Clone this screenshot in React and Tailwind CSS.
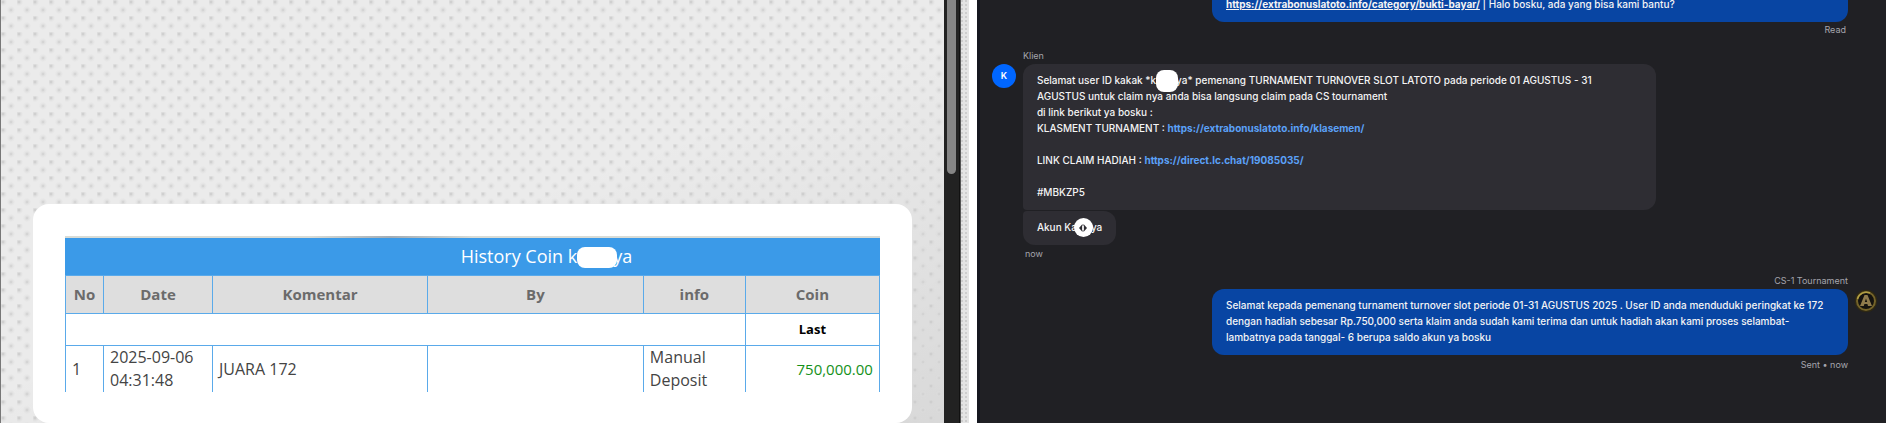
import React from 'react';

const columns = ['No', 'Date', 'Komentar', 'By', 'info', 'Coin'];

const rows = [
  { no: 1, date: '2025-09-06 04:31:48', comment: 'JUARA 172', by: '', info: 'Manual Deposit', coin: '750,000.00' },
];

// woven paper background, two staggered dot grids over a light shade
const texture =
  'bg-[#ebebeb] bg-[radial-gradient(circle_at_2px_2px,#c8c8c8_0,#d8d8d899_2px,transparent_4px),radial-gradient(circle_at_10px_10px,#cecece_0,#dcdcdc99_2px,transparent_4px),linear-gradient(160deg,transparent_50%,#00000014)] bg-[length:16px_16px,16px_16px,100%_100%]';

function HistoryTable() {
  return (
    <table className="w-full table-fixed border-collapse border-x border-[#3b9ae8] text-base leading-[23px] text-[#444]">
      <colgroup>
        <col className="w-[38px]" />
        <col className="w-[109px]" />
        <col className="w-[215px]" />
        <col />
        <col className="w-[102px]" />
        <col className="w-[134px]" />
      </colgroup>
      <thead>
        <tr className="h-[38px] bg-[#3b9ae8] text-lg text-white">
          <th colSpan={6} className="pl-[148px] font-normal">
            History Coin k
            <span className="relative inline-block w-9">
              <span className="absolute -top-4 left-0 h-[21px] w-10 rounded-lg bg-white"></span>
            </span>
            ya
          </th>
        </tr>
        <tr className="h-[38px] bg-[#dedede] text-[15px] text-[#6b6b6b]">
          {columns.map((name) => (
            <th key={name} className="border border-[#5aaaea] font-bold">{name}</th>
          ))}
        </tr>
      </thead>
      <tbody>
        <tr className="h-8 text-[13px] text-black">
          <td colSpan={5} className="border border-[#5aaaea]"></td>
          <th className="border border-[#5aaaea] font-bold">Last</th>
        </tr>
        {rows.map((row) => (
          <tr key={row.no} className="h-[46px]">
            <td className="border-x border-[#5aaaea] px-1.5">{row.no}</td>
            <td className="border-x border-[#5aaaea] px-1.5">{row.date}</td>
            <td className="border-x border-[#5aaaea] px-1.5">{row.comment}</td>
            <td className="border-x border-[#5aaaea] px-1.5">{row.by}</td>
            <td className="border-x border-[#5aaaea] px-1.5">{row.info}</td>
            <td className="border-x border-[#5aaaea] px-1.5 text-right text-[15px] text-[#14911a]">{row.coin}</td>
          </tr>
        ))}
      </tbody>
    </table>
  );
}

function AgentLogo() {
  return (
    <svg viewBox="0 0 24 24" className="h-6 w-6" aria-hidden="true">
      <circle cx="12" cy="12" r="10.5" fill="#15130f" stroke="#2e2814" strokeWidth="1.5" />
      <circle cx="12" cy="12" r="9" fill="none" stroke="#75642a" strokeWidth="2" />
      <path d="M3.5 10A9 9 0 0 1 16 4" fill="none" stroke="#b3a045" strokeWidth="1.5" />
      <path d="M10.5 6h3l4.5 11h-4l-.6-2h-3l-.6 2H6z" fill="#8f7b4c" />
      <path d="m12 9.5-1.2 3.5h2.4z" fill="#15130f" />
    </svg>
  );
}

function ChatPanel() {
  return (
    <section className="flex min-w-0 flex-1 flex-col justify-end overflow-hidden border-l-3 border-[#15171f] bg-[#202024] pr-2 pb-[50px] pl-3 font-['Inter',sans-serif] text-[10px] leading-4 font-medium text-[#f4f4f5]">
      <div className="mr-[30px] flex flex-col items-end">
        <div className="w-full max-w-[636px] rounded-xl bg-[#0845a3] px-3.5 pt-2 pb-2.5">
          <a href="#bukti-bayar" className="font-bold underline">https://extrabonuslatoto.info/category/bukti-bayar/</a> | Halo bosku, ada yang bisa kami bantu?
        </div>
        <div className="mr-0.5 text-[9px] font-normal text-[#a5a5ad]">Read</div>
      </div>

      <div className="mt-2.5 flex gap-[7px]">
        <div className="mt-4 flex h-6 w-6 shrink-0 items-center justify-center rounded-full bg-[#0066ff] text-[9px] font-semibold text-white">K</div>
        <div className="flex min-w-0 flex-1 flex-col items-start">
          <div className="text-[9px] font-normal text-[#a5a5ad]">Klien</div>
          <div className="w-full max-w-[633px] rounded-xl rounded-bl-sm bg-[#2e2d33] px-3.5 pt-2 pb-2.5">
            <p>
              Selamat user ID kakak *k
              <span className="relative inline-block w-5">
                <span className="absolute -top-[14px] left-0 h-[22px] w-[22px] rounded-lg bg-white"></span>
              </span>
              ya* pemenang TURNAMENT TURNOVER SLOT LATOTO pada periode 01 AGUSTUS - 31
              <br />
              AGUSTUS untuk claim nya anda bisa langsung claim pada CS tournament
            </p>
            <p>di link berikut ya bosku :</p>
            <p>KLASMENT TURNAMENT : <a href="#klasemen" className="font-bold text-[#5ba1f8]">https://extrabonuslatoto.info/klasemen/</a></p>
            <p className="mt-4">LINK CLAIM HADIAH : <a href="#claim" className="font-bold text-[#5ba1f8]">https://direct.lc.chat/19085035/</a></p>
            <p className="mt-4">#MBKZP5</p>
          </div>
          <div className="mt-px rounded-xl rounded-tl-sm bg-[#2e2d33] px-3.5 pt-2 pb-2.5">
            Akun Ka
            <span className="relative inline-block w-3.5">
              <span className="absolute -top-[13px] -left-[3px] flex h-[19px] w-[19px] items-center justify-center rounded-full bg-white">
                <svg viewBox="0 0 8 8" className="h-2 w-2" aria-hidden="true">
                  <path d="M3.5 0 0 4l3.5 4M4.5 0 8 4 4.5 8" fill="#2e2d33" />
                  <path d="M4 2v4" stroke="#ffffff" strokeWidth="1.5" />
                </svg>
              </span>
            </span>
            ya
          </div>
          <div className="mt-px ml-0.5 text-[9px] font-normal text-[#a5a5ad]">now</div>
        </div>
      </div>

      <div className="mt-[11px] flex justify-end gap-1.5">
        <div className="flex min-w-0 flex-1 flex-col items-end">
          <div className="text-[9px] font-normal text-[#a5a5ad]">CS-1 Tournament</div>
          <div className="w-full max-w-[636px] rounded-xl bg-[#0845a3] px-3.5 pt-2 pb-2.5">
            Selamat kepada pemenang turnament turnover slot periode 01-31 AGUSTUS 2025 . User ID anda menduduki peringkat ke 172 dengan hadiah sebesar Rp.750,000 serta klaim anda sudah kami terima dan untuk hadiah akan kami proses selambat-lambatnya pada tanggal- 6 berupa saldo akun ya bosku
          </div>
          <div className="mt-0.5 text-[9px] font-normal text-[#a5a5ad]">Sent • now</div>
        </div>
        <div className="mt-4 shrink-0">
          <AgentLogo />
        </div>
      </div>
    </section>
  );
}

export default function App() {
  return (
    <div className="flex h-screen overflow-hidden">
      <section className={`flex w-[50.05%] shrink-0 flex-col justify-end border-l border-[#777] px-8 font-['Open_Sans',sans-serif] ${texture}`}>
        <div className="rounded-2xl bg-white px-8 pt-8 pb-[31px]">
          <div className="h-0.5 bg-linear-to-r from-[#d9dcd6] from-30% via-[#a3adb5] via-40% to-[#d9dcd6] to-50%"></div>
          <HistoryTable />
        </div>
      </section>
      <div className="w-4 shrink-0 border-r border-[#111] bg-[#222] px-[3px]">
        <div className="h-[174px] rounded-b-full bg-[#858585]"></div>
      </div>
      <div className="w-[9px] shrink-0 border-l border-[#555] bg-[#e4e4e4] bg-[radial-gradient(circle_at_1px_1px,#cdcdcd_1px,transparent_1px)] bg-[length:4px_4px]"></div>
      <div className="w-2 shrink-0 bg-white"></div>
      <ChatPanel />
    </div>
  );
}
